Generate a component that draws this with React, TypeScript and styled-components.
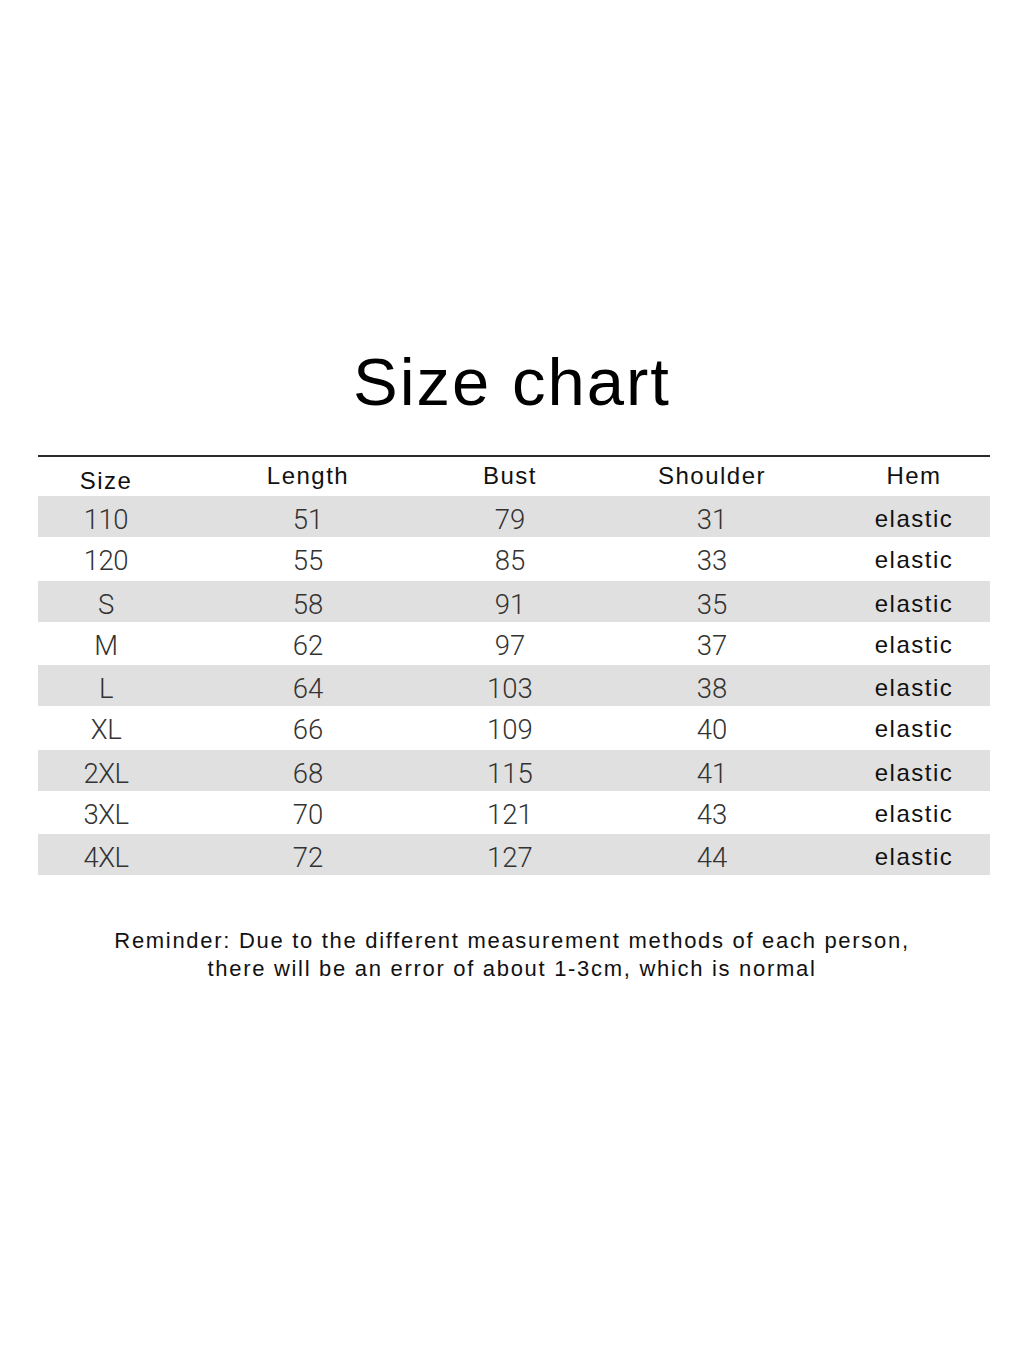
import React from "react";
import styled, { createGlobalStyle } from "styled-components";

const Global = createGlobalStyle`
  html, body { margin: 0; padding: 0; background: #ffffff; }
  body { font-family: "Liberation Sans", Arial, sans-serif; }
`;

const Page = styled.div`
  width: 1024px;
  min-height: 1365px;
  background: #ffffff;
  padding-top: 348px;
  box-sizing: border-box;
  display: flex;
  flex-direction: column;
  align-items: center;
`;

const Title = styled.h1`
  margin: 0;
  font-family: "Liberation Sans", Arial, sans-serif;
  font-weight: 400;
  font-size: 67px;
  line-height: 67px;
  letter-spacing: 2px;
  color: #000;
  text-align: center;
`;

const Table = styled.div`
  width: 952px;
  margin: 40px 0 0 4px;
  border-top: 2px solid #2a2a2a;
  display: flex;
  flex-direction: column;
`;

const COLS = "169px 202px 202px 202px 177px";

const HeaderRow = styled.div`
  display: grid;
  grid-template-columns: ${COLS};
  height: 39px;
`;

const Row = styled.div<{ $shaded: boolean }>`
  display: grid;
  grid-template-columns: ${COLS};
  height: ${(p) => (p.$shaded ? "41px" : "43.5px")};
  background: ${(p) => (p.$shaded ? "#e0e0e0" : "#ffffff")};
`;

const HeadCell = styled.div<{ $col: number; $drop: number }>`
  text-align: center;
  font-family: "Liberation Sans", Arial, sans-serif;
  font-size: 24px;
  line-height: 24px;
  letter-spacing: 1.5px;
  color: #111;
  padding-top: ${(p) => 7 + p.$drop}px;
  padding-right: ${(p) => (p.$col === 0 ? 33 : 0)}px;
  padding-left: ${(p) => (p.$col === 4 ? 25 : 0)}px;
`;

const NumCell = styled.div<{ $col: number }>`
  text-align: center;
  font-family: Roboto, "Liberation Sans", sans-serif;
  font-weight: 300;
  font-size: 27.5px;
  line-height: 27px;
  letter-spacing: ${(p) => (p.$col === 0 ? "-0.5px" : "0px")};
  color: #333;
  padding-top: 10px;
  padding-right: ${(p) => (p.$col === 0 ? 33 : 0)}px;
  padding-left: ${(p) => (p.$col === 4 ? 25 : 0)}px;
`;

const TextCell = styled.div`
  text-align: center;
  font-family: "Liberation Sans", Arial, sans-serif;
  font-size: 24px;
  line-height: 24px;
  letter-spacing: 1.5px;
  color: #111;
  padding-top: 11px;
  padding-left: 25px;
`;

const Reminder = styled.p`
  margin: 52px 0 0;
  font-family: "Liberation Sans", Arial, sans-serif;
  font-size: 22px;
  line-height: 28px;
  letter-spacing: 1.7px;
  color: #111;
  text-align: center;
`;

const headers = ["Size", "Length", "Bust", "Shoulder", "Hem"];

const rows: [string, string, string, string][] = [
  ["110", "51", "79", "31"],
  ["120", "55", "85", "33"],
  ["S", "58", "91", "35"],
  ["M", "62", "97", "37"],
  ["L", "64", "103", "38"],
  ["XL", "66", "109", "40"],
  ["2XL", "68", "115", "41"],
  ["3XL", "70", "121", "43"],
  ["4XL", "72", "127", "44"],
];

export default function App() {
  return (
    <>
      <Global />
      <Page>
        <Title>Size chart</Title>
        <Table>
          <HeaderRow>
            {headers.map((h, i) => (
              <HeadCell key={h} $col={i} $drop={i === 0 ? 5 : 0}>
                {h}
              </HeadCell>
            ))}
          </HeaderRow>
          {rows.map((r, ri) => (
            <Row key={r[0]} $shaded={ri % 2 === 0}>
              {r.map((v, ci) => (
                <NumCell key={ci} $col={ci}>
                  {v}
                </NumCell>
              ))}
              <TextCell>elastic</TextCell>
            </Row>
          ))}
        </Table>
        <Reminder>
          Reminder: Due to the different measurement methods of each person,
          <br />
          there will be an error of about 1-3cm, which is normal
        </Reminder>
      </Page>
    </>
  );
}
